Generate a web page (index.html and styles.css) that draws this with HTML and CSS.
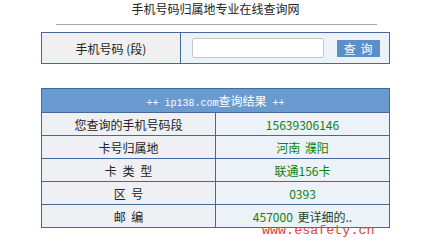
FILE: index.html
```html
<!DOCTYPE html>
<html lang="zh-CN">
<head>
    <meta charset="UTF-8">
    <title>手机号码归属地专业在线查询网</title>
    <link rel="stylesheet" href="styles.css">
</head>
<body>
    <div class="page">
        <h1 class="title">手机号码归属地专业在线查询网</h1>
        <div class="rule"></div>

        <table class="lookup">
            <tr>
                <td class="label">手机号码 (段)</td>
                <td class="field">
                    <input type="text" class="mobile">
                    <button type="button" class="go">查 询</button>
                </td>
            </tr>
        </table>

        <table class="result">
            <tr>
                <th colspan="2"><span class="ascii">++ ip138.com</span>查询结果<span class="ascii"> ++</span></th>
            </tr>
            <tr>
                <td class="label">您查询的手机号码段</td>
                <td class="value">15639306146</td>
            </tr>
            <tr>
                <td class="label">卡号归属地</td>
                <td class="value">河南&nbsp;濮阳</td>
            </tr>
            <tr>
                <td class="label">卡 类 型</td>
                <td class="value">联通156卡</td>
            </tr>
            <tr>
                <td class="label">区 号</td>
                <td class="value">0393</td>
            </tr>
            <tr>
                <td class="label">邮 编</td>
                <td class="value">457000 <a href="#" class="more">更详细的..</a></td>
            </tr>
        </table>
    </div>

    <div class="mark">www.esafety.cn</div>
</body>
</html>
```

FILE: styles.css
```css
body {
    margin: 0;
    background: #ffffff;
    font-family: "Noto Sans CJK SC", "Noto Sans", sans-serif;
    font-size: 12px;
    color: #333;
}

.page {
    width: 349px;
    margin-left: 41px;
}

.title {
    margin: 0;
    height: 17px;
    padding-top: 0;
    font-size: 12px;
    font-weight: normal;
    line-height: 17px;
    text-align: center;
    color: #222;
}

.rule {
    width: 321px;
    height: 1px;
    margin: 7px 0 7px 15px;
    background: #a8a8a8;
}

table {
    width: 349px;
    border-collapse: collapse;
    table-layout: fixed;
}

td, th {
    border: 1px solid #46699c;
    padding: 0;
    text-align: center;
}

.lookup td {
    height: 30px;
}

.lookup .label {
    width: 138px;
    background: #f0f0f0;
    color: #222;
}

.lookup .field {
    background: #edf2f9;
    text-align: left;
    padding-left: 11px;
}

.mobile {
    width: 128px;
    height: 16px;
    padding: 1px;
    border: 1px solid #c8c8c8;
    border-radius: 2px;
    vertical-align: middle;
    background: #fff;
}

.go {
    width: 43px;
    height: 17px;
    margin-left: 10px;
    padding: 0;
    border: none;
    background: #5b8fc9;
    color: #fff;
    font-family: "Noto Sans CJK SC", sans-serif;
    font-size: 12px;
    line-height: 17px;
    word-spacing: 2px;
    vertical-align: middle;
}

.result {
    margin-top: 24px;
}

.result th {
    height: 23px;
    background: #6a9bd0;
    color: #fff;
    font-weight: normal;
}

.ascii {
    font-family: "Liberation Mono", monospace;
    font-size: 10px;
    white-space: pre;
}

.result td {
    height: 22px;
}

.result .label {
    width: 138px;
    background: #eff0f4;
    color: #222;
    word-spacing: 3px;
}

.result .value {
    background: #edf2f9;
    color: #108010;
    word-spacing: 2px;
}

.more {
    color: #224422;
    text-decoration: none;
}

.mark {
    position: absolute;
    left: 262px;
    top: 224px;
    font-family: "Liberation Mono", monospace;
    font-size: 13.4px;
    line-height: 14px;
    color: #d84444;
}
```
